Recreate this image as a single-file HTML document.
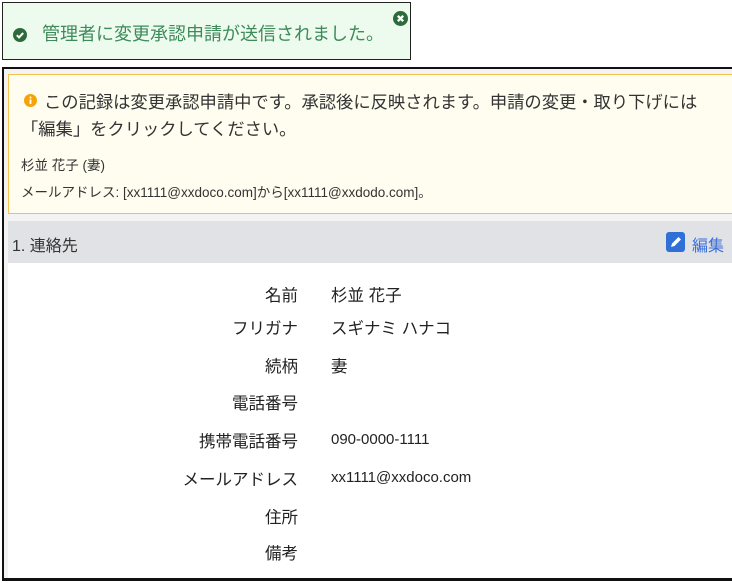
<!DOCTYPE html>
<html><head><meta charset="utf-8"><style>
*{box-sizing:border-box;margin:0;padding:0}
body{width:732px;height:581px;background:#fff;font-family:"Liberation Sans","Noto Sans CJK JP",sans-serif;position:relative;overflow:hidden;color:#222}
.toast{position:absolute;left:2px;top:2px;width:409px;height:58px;border:1px solid #222;background:#edfbee;}
.toast .t{position:absolute;left:39px;top:17px;font-size:18px;color:#3d8a5a;white-space:nowrap}
.outer{position:absolute;left:2px;top:67px;width:731px;height:514px;border:2px solid #111;border-right:none;background:#f3f3f3}
.note{position:absolute;left:4px;top:5px;width:726px;height:140px;background:#fffdf0;border:1px solid #f2c24a;border-right:none}
.hdr{position:absolute;left:4px;top:152px;width:726px;height:42px;background:#e1e2e6}
.body{position:absolute;left:4px;top:194px;width:726px;height:320px;background:#fff}
.row{position:absolute;left:0;width:726px;font-size:16.5px}
.row .l{position:absolute;right:436px;text-align:right;white-space:nowrap}
.row .v{position:absolute;left:323px;white-space:nowrap}
.row .n{font-size:15px;top:3px}
</style></head><body>
<div class="toast">
<svg style="position:absolute;left:10px;top:25px" width="14" height="14" viewBox="0 0 14 14"><circle cx="7" cy="7" r="7" fill="#2e6b3c"/><path d="M3.8 7.2l2.2 2.2 4.2-4.4" stroke="#fff" stroke-width="2" fill="none"/></svg>
<div class="t">管理者に変更承認申請が送信されました。</div>
<svg style="position:absolute;left:390px;top:8px" width="15" height="15" viewBox="0 0 14 14"><circle cx="7" cy="7" r="7" fill="#2e6b3c"/><path d="M4.5 4.5l5 5M9.5 4.5l-5 5" stroke="#fff" stroke-width="2.2"/></svg>
</div>
<div class="outer">
<div class="note">
<svg style="position:absolute;left:15px;top:19px" width="13" height="13" viewBox="0 0 14 14"><circle cx="7" cy="7" r="7" fill="#f4a30d"/><rect x="6" y="5.8" width="2" height="5" fill="#fff"/><circle cx="7" cy="3.8" r="1.1" fill="#fff"/></svg>
<div style="position:absolute;left:35px;top:13px;font-size:17.3px;color:#333;white-space:nowrap">この記録は変更承認申請中です。承認後に反映されます。申請の変更・取り下げには</div>
<div style="position:absolute;left:12px;top:40px;font-size:17.3px;color:#333;white-space:nowrap">「編集」をクリックしてください。</div>
<div style="position:absolute;left:12px;top:79px;font-size:13.5px;color:#333">杉並 花子 (妻)</div>
<div style="position:absolute;left:12px;top:106px;font-size:13.5px;color:#333;white-space:nowrap">メールアドレス: [xx1111@xxdoco.com]から[xx1111@xxdodo.com]。</div>
</div>
<div class="hdr">
<div style="position:absolute;left:4px;top:11px;font-size:16px;color:#333">1. 連絡先</div>
<svg style="position:absolute;left:658px;top:11px" width="19" height="20" viewBox="0 0 19 20"><rect width="19" height="20" rx="3" fill="#2f6fd6"/><path d="M5 15l1-3.5 6.5-6.5 2.5 2.5-6.5 6.5z" fill="#fff"/></svg>
<div style="position:absolute;left:684px;top:11px;font-size:16px;color:#3a6fd8">編集</div>
</div>
<div class="body">
<div class="row" style="top:19px"><span class="l">名前</span><span class="v">杉並 花子</span></div>
<div class="row" style="top:52px"><span class="l">フリガナ</span><span class="v">スギナミ ハナコ</span></div>
<div class="row" style="top:90px"><span class="l">続柄</span><span class="v">妻</span></div>
<div class="row" style="top:127px"><span class="l">電話番号</span></div>
<div class="row" style="top:165px"><span class="l">携帯電話番号</span><span class="v n">090-0000-1111</span></div>
<div class="row" style="top:203px"><span class="l">メールアドレス</span><span class="v n">xx1111@xxdoco.com</span></div>
<div class="row" style="top:241px"><span class="l">住所</span></div>
<div class="row" style="top:277px"><span class="l">備考</span></div>
</div>
<div style="position:absolute;left:-2px;top:509px;width:733px;height:3px;background:#111"></div>
</div>
</body></html>
